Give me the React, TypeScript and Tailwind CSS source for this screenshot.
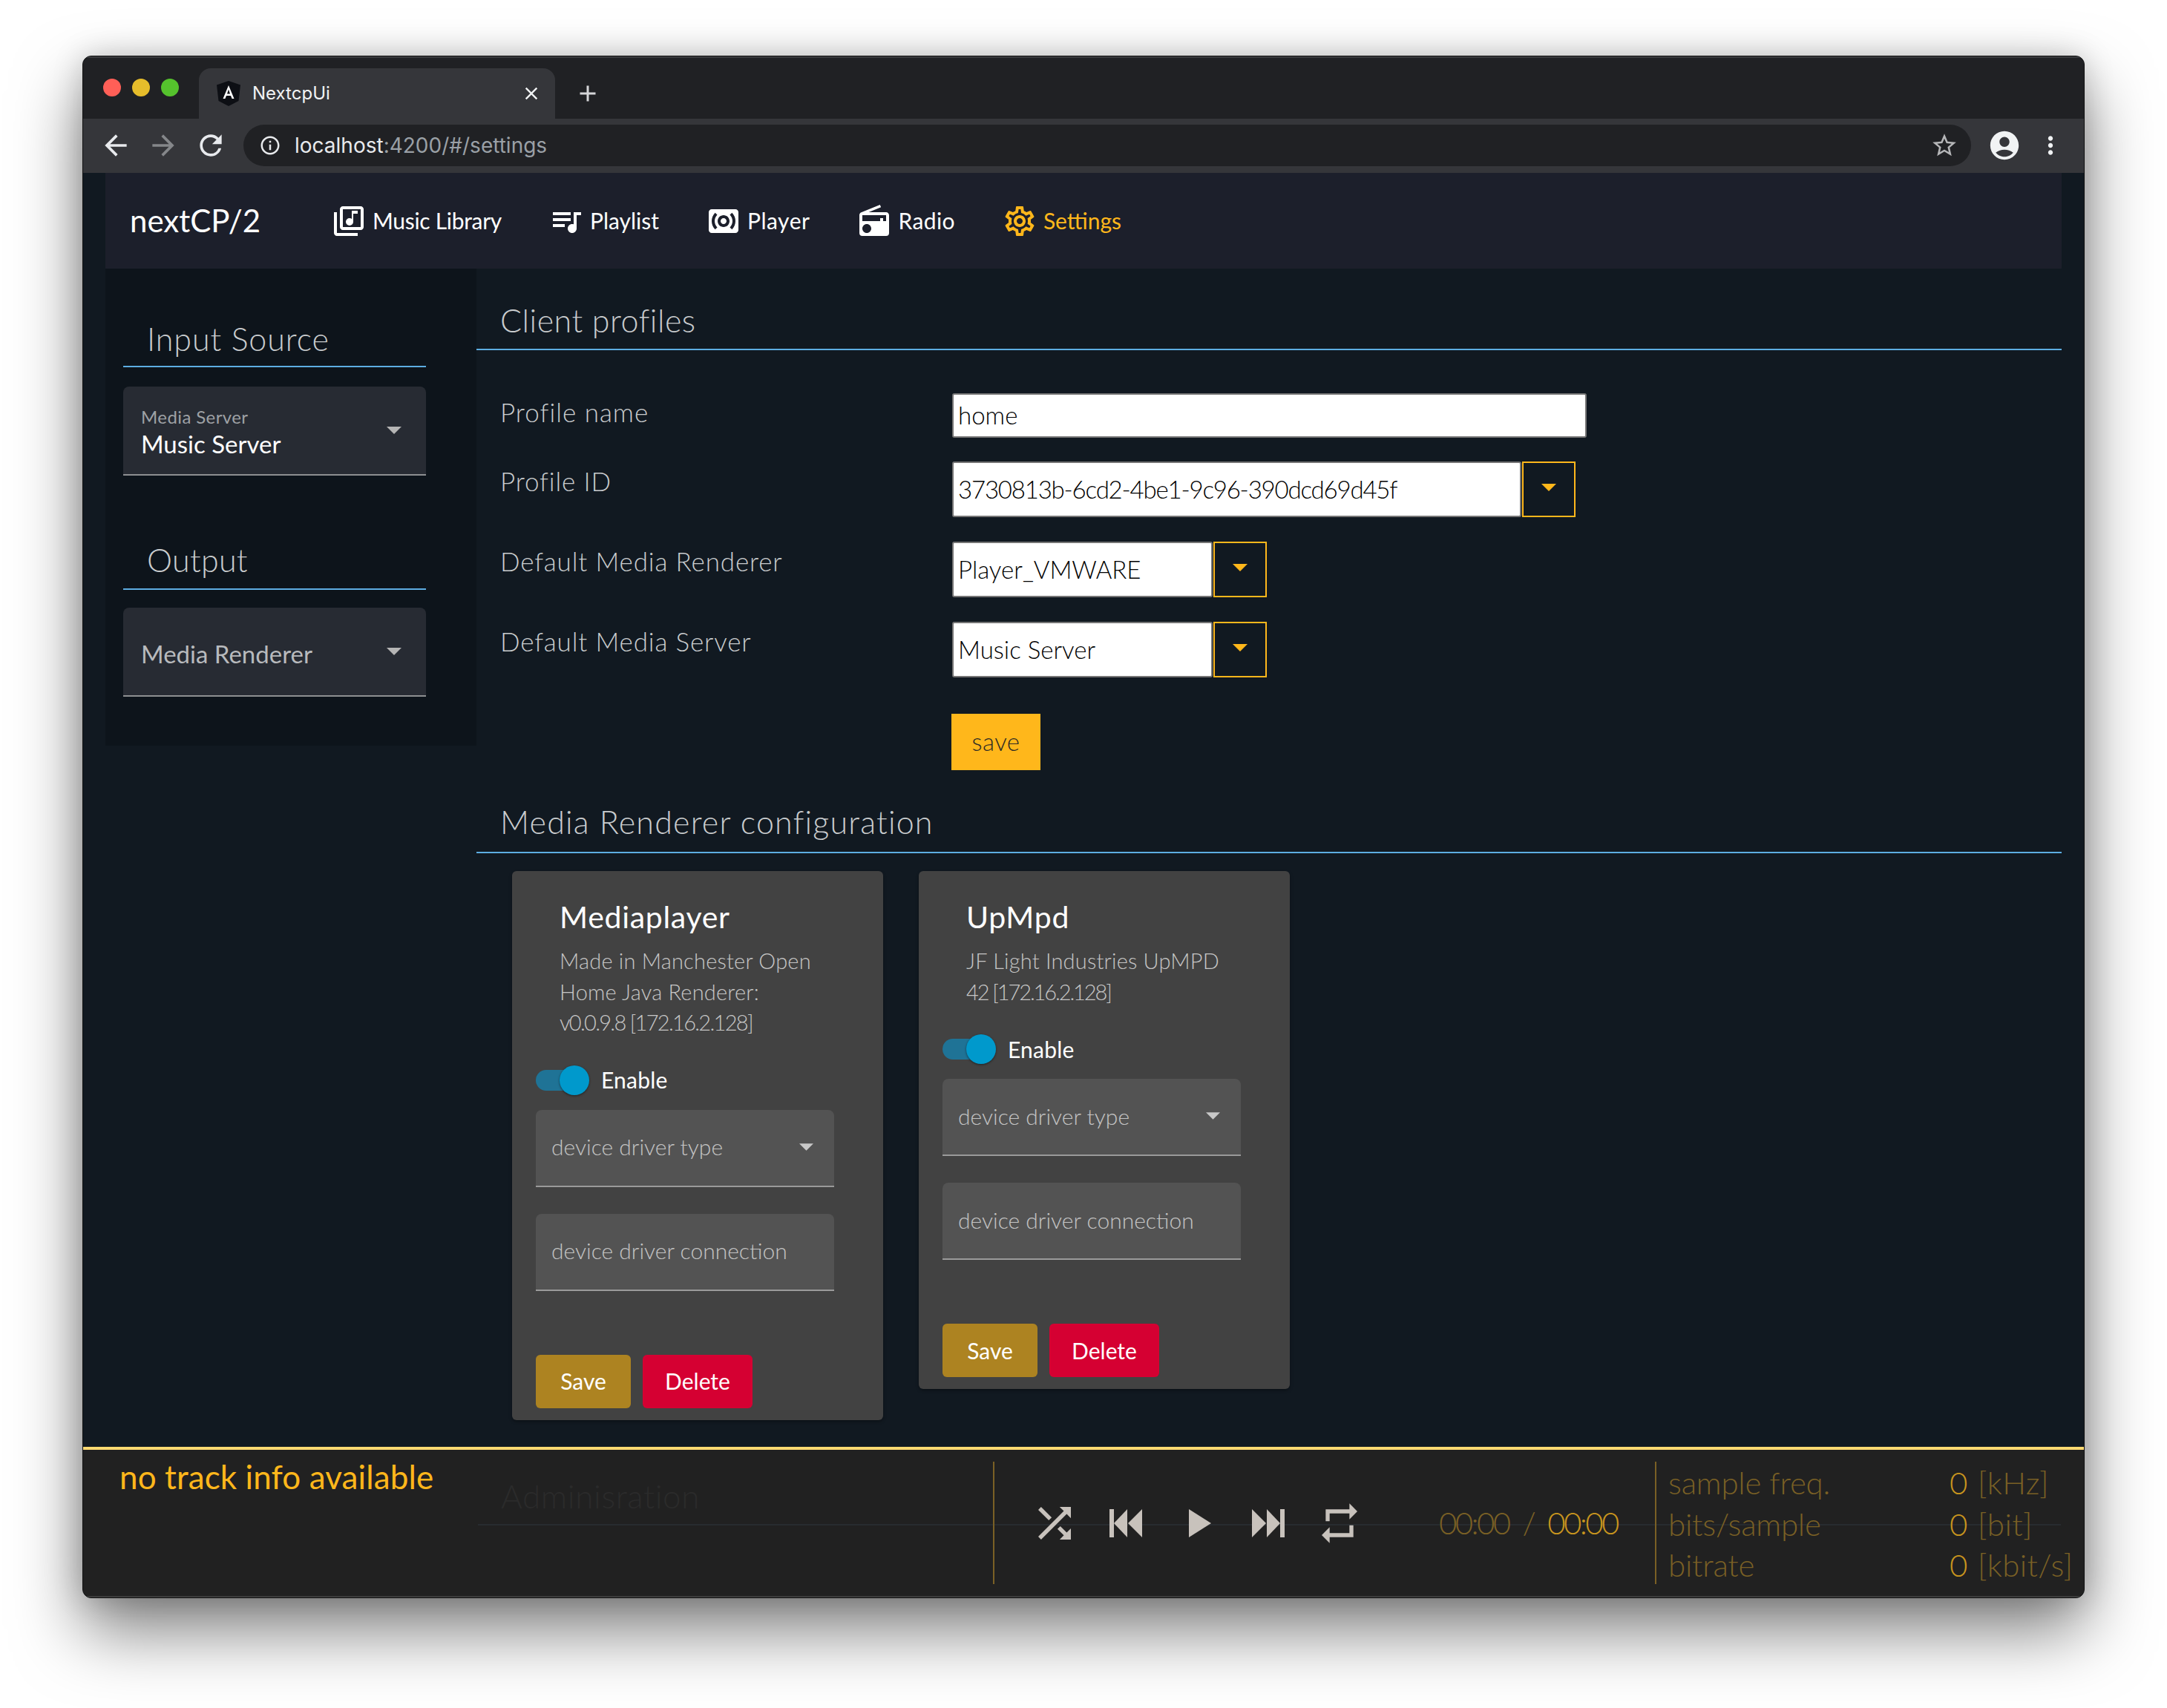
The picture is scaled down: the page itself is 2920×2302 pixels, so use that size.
import React from 'react';
import {
  MdOutlineLibraryMusic, MdQueueMusic, MdSurroundSound, MdRadio, MdOutlineSettings,
  MdArrowBack, MdArrowForward, MdRefresh, MdInfoOutline, MdStarBorder, MdAccountCircle,
  MdMoreVert, MdClose, MdAdd, MdShuffle, MdRepeat,
} from 'react-icons/md';

const NAV = [
  { label: 'Music Library', Icon: MdOutlineLibraryMusic, textClass: 'text-white tracking-[-0.3px]' },
  { label: 'Playlist', Icon: MdQueueMusic, textClass: 'text-white' },
  { label: 'Player', Icon: MdSurroundSound, textClass: 'text-white tracking-[0.5px]' },
  { label: 'Radio', Icon: MdRadio, textClass: 'text-white tracking-[0.4px]' },
  { label: 'Settings', Icon: MdOutlineSettings, textClass: 'text-[#ffb71b]' },
];

const Caret: React.FC<{ className?: string }> = ({ className }) => (
  <svg viewBox="0 0 20 10" className={className}>
    <polygon points="0,0 20,0 10,10" fill="currentColor" />
  </svg>
);

const AngularLogo = () => (
  <svg viewBox="0 0 32 34" className="w-[32px] h-[34px]">
    <polygon points="16,0 32,5.5 29.5,27 16,34 2.5,27 0,5.5" fill="#0d0f14" />
    <polygon points="16,6 23.5,24 20.6,24 19,20 13,20 11.4,24 8.5,24" fill="#fff" />
    <polygon points="16,11.5 14,17.4 18,17.4" fill="#0d0f14" />
  </svg>
);

const Section: React.FC<{ title: string; className: string }> = ({ title, className }) => (
  <div className={`flex items-end border-b-2 border-[#5dade2] pl-[32px] text-[#c9ccce] text-[43px] font-light ${className}`}>
    {title}
  </div>
);

const SideSelect: React.FC<{ label?: string; value: string; valueClass: string }> = ({ label, value, valueClass }) => (
  <div className="h-[120px] w-[408px] rounded-t-[8px] bg-[#272b33] border-b-2 border-[#8d8f91] pl-[24px] pr-[33px] flex items-center justify-between">
    <div className="flex flex-col pt-[6px]">
      {label && <span className="text-[24px] leading-[30px] tracking-[0.4px] text-[#9ea1a5]">{label}</span>}
      <span className={`text-[33px] leading-[42px] ${valueClass}`}>{value}</span>
    </div>
    <Caret className="w-[20px] h-[10px] text-[#b5b5b5]" />
  </div>
);

const ComboRow: React.FC<{ label: string; value: string; inputClass: string }> = ({ label, value, inputClass }) => (
  <div className="flex">
    <div className="w-[609px] pt-[6px] text-[35px] leading-[40px] text-[#c9ccce] font-light tracking-[0.85px]">{label}</div>
    <div className="flex h-[75px]">
      <div className={`${inputClass} h-full rounded-[3px] bg-white border-2 border-[#757575] flex items-center pl-[6px] text-[33px] text-black font-light`}>
        {value}
      </div>
      <div className="w-[72px] h-full ml-[1px] border-2 border-[#ffb71b] flex items-center justify-center pb-[6px]">
        <Caret className="w-[20px] h-[10px] text-[#ffb71b]" />
      </div>
    </div>
  </div>
);

const DriverField: React.FC<{ label: string; caret?: boolean }> = ({ label, caret }) => (
  <div className="h-[104px] rounded-t-[8px] bg-[#535353] border-b-2 border-[#9a9a9a] pl-[21px] pr-[28px] pb-[2px] flex items-center justify-between">
    <span className="text-[30px] text-[#c4c4c4] font-light">{label}</span>
    {caret && <Caret className="w-[19px] h-[10px] text-[#c8c8c8]" />}
  </div>
);

const RendererCard: React.FC<{ title: string; lines: { text: string; cls: string }[] }> = ({ title, lines }) => (
  <div className="w-[500px] rounded-[6px] bg-[#424242] px-[32px] pt-[32px] pb-[16px] shadow-[0_2px_4px_rgba(0,0,0,0.35)]">
    <div className="pl-[32px] text-[41px] leading-[60px] text-white tracking-[0.7px]">{title}</div>
    <div className="pl-[32px] pr-[24px] mt-[8px] text-[29px] leading-[41.5px] text-[#c6c6c6] font-light">
      {lines.map((line) => <div key={line.text} className={line.cls}>{line.text}</div>)}
    </div>
    <div className="flex items-center h-[40px] mt-[37px]">
      <div className="relative w-[62px] h-[28px] rounded-full bg-[#1f7396]">
        <div className="absolute right-[-10px] top-[-6px] w-[40px] h-[40px] rounded-full bg-[#0099cc] shadow-[0_1px_3px_rgba(0,0,0,0.5)]" />
      </div>
      <span className="ml-[26px] text-[30px] text-white tracking-[0.2px]">Enable</span>
    </div>
    <div className="mt-[20px] flex flex-col gap-[36px] w-[402px]">
      <DriverField label="device driver type" caret />
      <DriverField label="device driver connection" />
    </div>
    <div className="mt-[86px] flex gap-[16px]">
      <div className="w-[128px] h-[72px] rounded-[6px] bg-[#ad8321] flex items-center justify-center text-[30px] text-white">Save</div>
      <div className="w-[148px] h-[72px] rounded-[6px] bg-[#d50032] flex items-center justify-center text-[30px] text-white">Delete</div>
    </div>
  </div>
);

const Stat: React.FC<{ label: string; unit: string }> = ({ label, unit }) => (
  <div className="flex h-[55.5px] items-center text-[42px] font-light text-[#7a6025]">
    <span className="w-[379px] tracking-[-0.2px]">{label}</span>
    <span className="w-[38px] text-[#c8951e]">0</span>
    <span className="tracking-[0.4px]">{unit}</span>
  </div>
);

export default function App() {
  return (
    <div className="w-[2920px] h-[2302px] bg-white overflow-hidden pt-[75px] pl-[111px] font-[Lato,sans-serif]">
      <div className="w-[2698px] h-[2079px] rounded-[12px] overflow-hidden flex flex-col bg-[#111921] border border-[#111] shadow-[0_44px_90px_rgba(0,0,0,0.5),0_0_40px_rgba(0,0,0,0.18)]">
        {/* browser tab strip */}
        <div className="h-[84px] shrink-0 bg-[#202124] border-t-2 border-[#3a3b3e] flex items-end font-[Inter,sans-serif]">
          <div className="w-[156px] h-full flex items-center gap-[15px] pl-[27px] pb-[2px]">
            <span className="w-[24px] h-[24px] rounded-full bg-[#ff5f57]" />
            <span className="w-[24px] h-[24px] rounded-full bg-[#e6bd2b]" />
            <span className="w-[24px] h-[24px] rounded-full bg-[#55c22d]" />
          </div>
          <div className="w-[480px] h-[68px] rounded-t-[16px] bg-[#35363a] flex items-center pl-[24px] pr-[18px] text-[#f1f3f4] text-[24px]">
            <AngularLogo />
            <span className="ml-[16px] flex-1">NextcpUi</span>
            <MdClose size={28} />
          </div>
          <div className="h-[68px] flex items-center pl-[26px] text-[#d5d6d8]"><MdAdd size={36} /></div>
        </div>
        {/* browser toolbar */}
        <div className="h-[73px] shrink-0 bg-[#35363a] flex items-start font-[Inter,sans-serif]">
          <div className="w-[216px] h-[72px] flex items-center gap-[20px] pl-[22px]">
            <MdArrowBack size={44} className="text-[#e8eaed]" />
            <MdArrowForward size={44} className="text-[#85878a]" />
            <MdRefresh size={44} className="text-[#e8eaed]" />
          </div>
          <div className="w-[2328px] h-[56px] mt-[8px] rounded-full bg-[#202124] flex items-center pl-[21px] pr-[17px]">
            <MdInfoOutline size={30} className="text-[#e8eaed]" />
            <span className="ml-[18px] flex-1 text-[28px] text-[#e8eaed]">localhost<span className="text-[#9aa0a6]">:4200/#/settings</span></span>
            <MdStarBorder size={38} className="text-[#b5b6b8]" />
          </div>
          <div className="flex-1 h-[72px] flex items-center pl-[22px] gap-[20px]">
            <MdAccountCircle size={46} className="text-[#f1f3f4]" />
            <MdMoreVert size={38} className="text-[#f1f3f4]" />
          </div>
        </div>

        {/* app */}
        <div className="flex-1 min-h-0 relative px-[30px] overflow-hidden">
          <div className="h-[129px] bg-[#1c1f2b] flex items-center pl-[33px] text-white">
            <span className="w-[271px] text-[42px]">nextCP/2</span>
            <div className="flex items-center gap-[63px]">
              {NAV.map(({ label, Icon, textClass }) => (
                <div key={label} className={`flex items-center gap-[8px] text-[30px] ${textClass}`}>
                  <Icon size={48} />
                  <span>{label}</span>
                </div>
              ))}
            </div>
          </div>

          <div className="flex items-start">
            <aside className="w-[500px] h-[643px] shrink-0 bg-[#0d141b] pl-[24px]">
              <Section title="Input Source" className="w-[408px] h-[133px] pb-[4px] tracking-[0.9px]" />
              <div className="mt-[26px]">
                <SideSelect label="Media Server" value="Music Server" valueClass="text-white" />
              </div>
              <Section title="Output" className="w-[408px] h-[154px] pb-[6px] tracking-[0.3px]" />
              <div className="mt-[24px]">
                <SideSelect value="Media Renderer" valueClass="text-[#b8babd]" />
              </div>
            </aside>

            <main className="flex-1 min-w-0">
              <Section title="Client profiles" className="h-[110px] pb-[6px] tracking-[0.5px]" />
              <div className="pl-[32px] pt-[58px]">
                <div className="flex">
                  <div className="w-[609px] pt-[5px] text-[35px] leading-[40px] text-[#c9ccce] font-light tracking-[1px]">Profile name</div>
                  <div className="w-[855px] h-[60px] rounded-[3px] bg-white border-2 border-[#757575] flex items-center pl-[6px] text-[33px] text-black font-light">home</div>
                </div>
                <div className="mt-[32px] flex flex-col gap-[33px]">
                  <ComboRow label="Profile ID" value="3730813b-6cd2-4be1-9c96-390dcd69d45f" inputClass="w-[767px] tracking-[-1.2px]" />
                  <ComboRow label="Default Media Renderer" value="Player_VMWARE" inputClass="w-[351px]" />
                  <ComboRow label="Default Media Server" value="Music Server" inputClass="w-[351px]" />
                </div>
                <div className="ml-[608px] mt-[49px] w-[120px] h-[76px] bg-[#ffb71b] flex items-center justify-center text-[33px] tracking-[0.5px] text-[#2e2b25] font-light">save</div>
              </div>
              <Section title="Media Renderer configuration" className="h-[112px] pb-[8px] tracking-[1.2px]" />
              <div className="mt-[24px] ml-[48px] flex items-start gap-[48px]">
                <RendererCard
                  title="Mediaplayer"
                  lines={[
                    { text: 'Made in Manchester Open', cls: 'tracking-[0.2px]' },
                    { text: 'Home Java Renderer:', cls: 'tracking-[0.2px]' },
                    { text: 'v0.0.9.8 [172.16.2.128]', cls: 'tracking-[-1.7px]' },
                  ]}
                />
                <RendererCard
                  title="UpMpd"
                  lines={[
                    { text: 'JF Light Industries UpMPD', cls: 'tracking-[0.2px]' },
                    { text: '42 [172.16.2.128]', cls: 'tracking-[-2.1px]' },
                  ]}
                />
              </div>
            </main>
          </div>

          {/* player bar, sits over the page */}
          <div className="absolute left-0 right-0 bottom-0 h-[203px] bg-[#212121] border-t-4 border-[#ffd971] flex border-b-2 border-b-[#3c3c3c]">
            <div className="absolute left-[532px] right-[31px] top-[100px] h-[2px] bg-[#282c30]" />
            <div className="absolute left-[563px] top-[29px] text-[44px] font-light tracking-[0.6px] text-[#2b2b2b]">Adminisration</div>
            <div className="relative w-[1226px] pl-[49px] pt-[8px] text-[44px] leading-[56px] tracking-[0.1px] text-[#ffb71b]">no track info available</div>
            <div className="relative my-[16px] w-[2px] bg-[#7a6025]" />
            <div className="relative flex items-center w-[890px] text-[#c8c2bc]">
              <MdShuffle size={66} className="ml-[48px]" />
              <svg viewBox="0 0 44 38" className="w-[44px] h-[38px] ml-[41px] fill-current">
                <rect x="0" y="0" width="6" height="38" /><polygon points="6,19 24,0 24,38" /><polygon points="25,19 44,0 44,38" />
              </svg>
              <svg viewBox="0 0 30 38" className="w-[30px] h-[38px] ml-[63px] fill-current"><polygon points="0,0 30,19 0,38" /></svg>
              <svg viewBox="0 0 44 38" className="w-[44px] h-[38px] ml-[55px] fill-current">
                <polygon points="0,0 19,19 0,38" /><polygon points="20,0 38,19 20,38" /><rect x="38" y="0" width="6" height="38" />
              </svg>
              <MdRepeat size={64} className="ml-[42px]" />
              <div className="ml-[102px] text-[42px] font-light tracking-[-2.6px] text-[#7a6025] whitespace-nowrap">
                00:00<span className="mx-[18px]">/</span><span className="text-[#c8951e]">00:00</span>
              </div>
            </div>
            <div className="relative my-[16px] w-[2px] bg-[#7a6025]" />
            <div className="relative pl-[16px] pt-[17px]">
              <Stat label="sample freq." unit="[kHz]" />
              <Stat label="bits/sample" unit="[bit]" />
              <Stat label="bitrate" unit="[kbit/s]" />
            </div>
          </div>
        </div>
      </div>
    </div>
  );
}
